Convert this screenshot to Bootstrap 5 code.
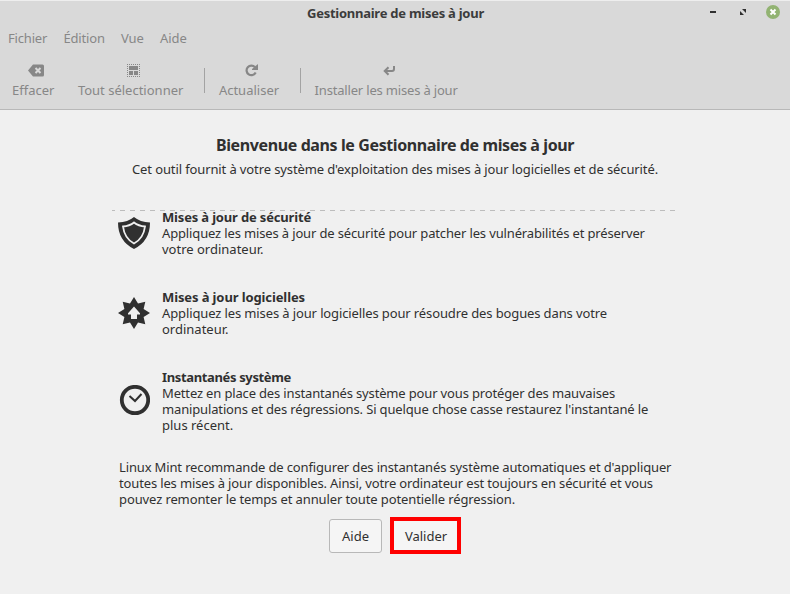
<!DOCTYPE html>
<html lang="fr">
<head>
<meta charset="utf-8">
<meta name="viewport" content="width=device-width, initial-scale=1">
<title>Gestionnaire de mises à jour</title>
<link href="https://cdn.jsdelivr.net/npm/bootstrap@5.3.0/dist/css/bootstrap.min.css" rel="stylesheet">
<style>
body{font:13px/16px "Noto Sans","Open Sans",sans-serif;color:#303030;background:#f0f0f0;height:594px;overflow:hidden}
.window-head{height:110px;background:#d9d9d9;border-top:1px solid #eee;border-bottom:1px solid #b8b8b8;color:#878787}
.title-row{height:23px;color:#3c3c3c;letter-spacing:-.256px;padding-left:307px;padding-right:10px}
.win-controls{gap:23px;margin-bottom:2px}
.win-controls svg:first-child{margin-right:-1px}
.win-controls svg:last-child{margin-left:-4px}
.menu-row{height:27px;padding-left:8px;gap:16.300px;letter-spacing:-.1px}
.tool-row{height:57px;padding-top:10px;padding-left:12px}
.tool{height:36px;background:none;border:0;color:inherit;padding:0;white-space:nowrap;line-height:16px}
.tool svg{display:block;margin:3px auto 5px;position:relative;left:2.500px}
.tool-sep{width:1px;height:25px;background:#a3a3a3;margin-top:7px}
.gap-select{margin-left:23.500px}.gap-sep{margin-left:20.500px}.gap-after{margin-left:14px}
.welcome h1{font-size:16px;line-height:20px;letter-spacing:-.39px;margin:25px 0 6px}
.intro{letter-spacing:-.115px}
.dashes{height:1px;width:563px;margin:33px 0 0 112px;background:repeating-linear-gradient(90deg,#bdbdbd 0 3px,transparent 3px 8px,#bdbdbd 8px 10px)}
.feature{padding-left:118px;gap:12px;white-space:nowrap;margin-bottom:32px}
.first-feature{margin-top:-2px}
.feature h2{font-size:13px;line-height:16px;margin:0}
.feature span,.advice span{display:block}
.advice{padding-left:119px;white-space:nowrap;margin-top:-6px}
.s11{letter-spacing:-.112px}.s12{letter-spacing:-.12px}.s14{letter-spacing:-.145px}.s16{letter-spacing:-.157px}.s17{letter-spacing:-.169px}.s18{letter-spacing:-.18px}.s36{letter-spacing:-.357px}
.actions{margin-top:10px;padding-left:329px;gap:8px}
.actions .btn{font-size:13px;line-height:16px;color:#303030;background:#f5f5f5;padding:0}
.actions .btn-help{width:53px;height:34px;border:1px solid #b8b8b8;border-radius:3px;margin-top:2px}
.actions .btn-ok{width:71px;height:37px;border:4px solid #f00;border-radius:0;padding:1px 0 0 1px}
</style>
<script src="https://cdn.jsdelivr.net/npm/bootstrap@5.3.0/dist/js/bootstrap.bundle.min.js"></script>
</head>
<body>
<header class="window-head">
  <div class="title-row d-flex align-items-center justify-content-between">
    <strong>Gestionnaire de mises à jour</strong>
    <div class="win-controls d-flex align-items-center">
      <svg width="8" height="8"><path d="M1 3h6v2H1z" fill="#303030"/></svg>
      <svg width="8" height="8"><path d="M3 1h4v4zM1 3l4 4H1z" fill="#303030"/></svg>
      <svg width="14" height="14"><circle cx="7" cy="7" r="7" fill="#92b372"/><path d="M4.500 4.500l5 5m0-5l-5 5" stroke="#fff" stroke-width="2"/></svg>
    </div>
  </div>
  <nav class="menu-row d-flex align-items-center"><span class="s18">Fichier</span><span class="s18">Édition</span><span>Vue</span><span>Aide</span></nav>
  <div class="tool-row d-flex">
    <button class="tool"><svg width="16" height="13"><path d="M5 .5h9.500Q16 .5 16 2v9q0 1.500-1.500 1.500H5L0 6.500z" fill="#878787"/><path d="M7.500 4l5 5m0-5l-5 5" stroke="#d9d9d9" stroke-width="2"/></svg>Effacer</button>
    <button class="tool gap-select"><svg width="13" height="13" fill="#878787"><path d="M.5 0v13M12.500 0v13M0 .5h13M0 12.500h13" stroke="#878787" stroke-dasharray="1 1"/><path d="M2 2h9v4H2zM2 7h4v4H2zM7 7h4v4H7z"/></svg>Tout sélectionner</button>
    <div class="tool-sep gap-sep"></div>
    <button class="tool gap-after"><svg width="13" height="13"><path d="M10.700 8.500A4.800 4.800 0 1 1 10 3.200" fill="none" stroke="#878787" stroke-width="2.200"/><path d="M13 0v6H7V5z" fill="#878787"/></svg>Actualiser</button>
    <div class="tool-sep gap-sep"></div>
    <button class="tool gap-after s18"><svg width="12" height="13" fill="none" stroke="#878787" stroke-width="2"><path d="M11 2v3q0 2-2 2H2M5.500 3.200L1.700 7l3.800 3.800"/></svg>Installer les mises à jour</button>
  </div>
</header>
<main class="welcome">
  <h1 class="text-center fw-bold">Bienvenue dans le Gestionnaire de mises à jour</h1>
  <div class="intro text-center">Cet outil fournit à votre système d'exploitation des mises à jour logicielles et de sécurité.</div>
  <div class="dashes"></div>
  <section class="feature first-feature d-flex align-items-center">
    <svg width="32" height="32"><path d="M16 0Q22 5 32 5.500Q32 24 16 32Q0 24 0 5.500Q10 5 16 0z" fill="#303030"/><path d="M16 5.500Q20.500 9 27 9.500Q25.500 21.500 16 26.500Q6.500 21.500 5 9.500Q11.500 9 16 5.500z" fill="#303030" stroke="#efefef" stroke-width="1.800"/></svg>
    <div><h2 class="fw-bold s17">Mises à jour de sécurité</h2><span class="s14">Appliquez les mises à jour de sécurité pour patcher les vulnérabilités et préserver</span><span>votre ordinateur.</span></div>
  </section>
  <section class="feature d-flex align-items-center">
    <svg width="32" height="32"><path d="M16 0l4 6.400 7.300-1.700-1.700 7.300 6.400 4-6.400 4 1.700 7.300-7.300-1.700-4 6.400-4-6.400-7.300 1.700 1.700-7.300L0 16l6.400-4-1.700-7.300L12 6.400z" fill="#303030"/><path d="M16 9.500l6 6.700v1.300H19V22h-6v-4.500h-3v-1.300z" fill="#efefef"/></svg>
    <div><h2 class="fw-bold s11">Mises à jour logicielles</h2><span class="s12">Appliquez les mises à jour logicielles pour résoudre des bogues dans votre</span><span>ordinateur.</span></div>
  </section>
  <section class="feature d-flex align-items-center">
    <svg width="32" height="32" fill="none" stroke="#303030"><circle cx="17" cy="15" r="13.200" stroke-width="3.800"/><path d="M11.500 11l5.500 5L23.500 9" stroke-width="2"/></svg>
    <div><h2 class="fw-bold s36">Instantanés système</h2><span class="s16">Mettez en place des instantanés système pour vous protéger des mauvaises</span><span class="s14">manipulations et des régressions. Si quelque chose casse restaurez l'instantané le</span><span>plus récent.</span></div>
  </section>
  <div class="advice"><span class="s14">Linux Mint recommande de configurer des instantanés système automatiques et d'appliquer</span><span class="s14">toutes les mises à jour disponibles. Ainsi, votre ordinateur est toujours en sécurité et vous</span><span class="s11">pouvez remonter le temps et annuler toute potentielle régression.</span></div>
  <div class="actions d-flex"><button class="btn btn-help">Aide</button><button class="btn btn-ok">Valider</button></div>
</main>
</body>
</html>
